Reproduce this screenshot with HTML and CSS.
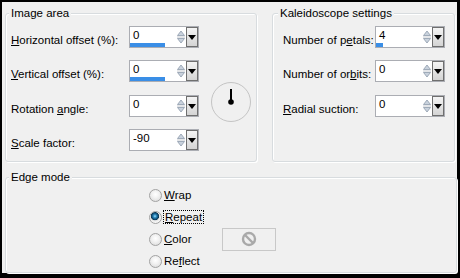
FILE: index.html
```html
<!DOCTYPE html>
<html>
<head>
<meta charset="utf-8">
<link rel="stylesheet" href="styles.css">
</head>
<body>
<div class="frame">
  <div class="top">
    <div class="group g-image">
      <span class="legend">Image area</span>
      <div class="rows">
        <label class="lbl"><u>H</u>orizontal offset (%):</label>
        <div class="spin"><div class="field"><span class="val">0</span><span class="bar" style="width:35px"></span></div><div class="arrows"><svg width="10" height="18" viewBox="0 0 10 18"><path d="M1.5 7.5 L5 3 L8.5 7.5 Z" fill="#c9d2dd" stroke="#8d9aab" stroke-width="0.8"/><path d="M1 9 H9" stroke="#c8ccd2"/><path d="M1.5 10.5 L5 15 L8.5 10.5 Z" fill="#c9d2dd" stroke="#8d9aab" stroke-width="0.8"/></svg></div><div class="drop"><i></i></div></div>
        <span></span>
        <label class="lbl"><u>V</u>ertical offset (%):</label>
        <div class="spin"><div class="field"><span class="val">0</span><span class="bar" style="width:35px"></span></div><div class="arrows"><svg width="10" height="18" viewBox="0 0 10 18"><path d="M1.5 7.5 L5 3 L8.5 7.5 Z" fill="#c9d2dd" stroke="#8d9aab" stroke-width="0.8"/><path d="M1 9 H9" stroke="#c8ccd2"/><path d="M1.5 10.5 L5 15 L8.5 10.5 Z" fill="#c9d2dd" stroke="#8d9aab" stroke-width="0.8"/></svg></div><div class="drop"><i></i></div></div>
        <span></span>
        <label class="lbl">Rotation <u>a</u>ngle:</label>
        <div class="spin"><div class="field"><span class="val">0</span></div><div class="arrows"><svg width="10" height="18" viewBox="0 0 10 18"><path d="M1.5 7.5 L5 3 L8.5 7.5 Z" fill="#c9d2dd" stroke="#8d9aab" stroke-width="0.8"/><path d="M1 9 H9" stroke="#c8ccd2"/><path d="M1.5 10.5 L5 15 L8.5 10.5 Z" fill="#c9d2dd" stroke="#8d9aab" stroke-width="0.8"/></svg></div><div class="drop"><i></i></div></div>
        <div class="dial"><svg width="42" height="42" viewBox="0 0 42 42"><circle cx="21" cy="21" r="19.5" fill="#f0f0f0" stroke="#c4c4c4" stroke-width="1"/><path d="M21 8 V21" stroke="#000" stroke-width="2"/><circle cx="21" cy="21" r="2.8" fill="#000"/></svg></div>
        <label class="lbl"><u>S</u>cale factor:</label>
        <div class="spin"><div class="field"><span class="val">-90</span></div><div class="arrows"><svg width="10" height="18" viewBox="0 0 10 18"><path d="M1.5 7.5 L5 3 L8.5 7.5 Z" fill="#c9d2dd" stroke="#8d9aab" stroke-width="0.8"/><path d="M1 9 H9" stroke="#c8ccd2"/><path d="M1.5 10.5 L5 15 L8.5 10.5 Z" fill="#c9d2dd" stroke="#8d9aab" stroke-width="0.8"/></svg></div><div class="drop"><i></i></div></div>
        <span></span>
      </div>
    </div>
    <div class="group g-kal">
      <span class="legend">Kaleidoscope settings</span>
      <div class="rows rows-k">
        <label class="lbl">Number of p<u>e</u>tals:</label>
        <div class="spin"><div class="field"><span class="val">4</span><span class="bar" style="width:7px"></span></div><div class="arrows"><svg width="10" height="18" viewBox="0 0 10 18"><path d="M1.5 7.5 L5 3 L8.5 7.5 Z" fill="#c9d2dd" stroke="#8d9aab" stroke-width="0.8"/><path d="M1 9 H9" stroke="#c8ccd2"/><path d="M1.5 10.5 L5 15 L8.5 10.5 Z" fill="#c9d2dd" stroke="#8d9aab" stroke-width="0.8"/></svg></div><div class="drop"><i></i></div></div>
        <label class="lbl">Number of or<u>b</u>its:</label>
        <div class="spin"><div class="field"><span class="val">0</span></div><div class="arrows"><svg width="10" height="18" viewBox="0 0 10 18"><path d="M1.5 7.5 L5 3 L8.5 7.5 Z" fill="#c9d2dd" stroke="#8d9aab" stroke-width="0.8"/><path d="M1 9 H9" stroke="#c8ccd2"/><path d="M1.5 10.5 L5 15 L8.5 10.5 Z" fill="#c9d2dd" stroke="#8d9aab" stroke-width="0.8"/></svg></div><div class="drop"><i></i></div></div>
        <label class="lbl"><u>R</u>adial suction:</label>
        <div class="spin"><div class="field"><span class="val">0</span></div><div class="arrows"><svg width="10" height="18" viewBox="0 0 10 18"><path d="M1.5 7.5 L5 3 L8.5 7.5 Z" fill="#c9d2dd" stroke="#8d9aab" stroke-width="0.8"/><path d="M1 9 H9" stroke="#c8ccd2"/><path d="M1.5 10.5 L5 15 L8.5 10.5 Z" fill="#c9d2dd" stroke="#8d9aab" stroke-width="0.8"/></svg></div><div class="drop"><i></i></div></div>
      </div>
    </div>
  </div>
  <div class="group g-edge">
    <span class="legend">Edge mode</span>
    <div class="opts">
      <div class="opt"><span class="radio"></span><span class="olbl"><u>W</u>rap</span></div>
      <div class="opt"><span class="radio on"></span><span class="olbl"><span class="focus"><u>R</u>epeat</span></span></div>
      <div class="opt"><span class="radio"></span><span class="olbl"><u>C</u>olor</span><span class="swatch"><svg width="16" height="16" viewBox="0 0 16 16"><circle cx="8" cy="8" r="6" fill="none" stroke="#a9a9a9" stroke-width="2.4"/><path d="M4 4 L12 12" stroke="#a9a9a9" stroke-width="2.4"/></svg></span></div>
      <div class="opt"><span class="radio"></span><span class="olbl">Re<u>f</u>lect</span></div>
    </div>
  </div>
</div>
</body>
</html>
```

FILE: styles.css
```css
* { box-sizing: border-box; }
body {
  margin: 0;
  font-family: "Liberation Sans", Arial, sans-serif;
  font-size: 11.5px;
  color: #000;
}
u { text-decoration: underline; text-underline-offset: 1px; }
.frame {
  width: 460px;
  height: 278px;
  border: solid #000;
  border-width: 2px 3px 5px 2px;
  background: #f0f0f0;
  padding: 11px 0 0 3px;
  display: flex;
  flex-direction: column;
}
.top {
  display: flex;
  gap: 15px;
  height: 150px;
}
.group {
  position: relative;
  border: 1px solid #d8dcdf;
  border-radius: 3px;
  box-shadow: inset 1px 1px 0 #fff, 1px 1px 0 #fff;
}
.legend {
  position: absolute;
  top: -8px;
  left: 3px;
  padding: 0 2px;
  background: #f0f0f0;
  line-height: 14px;
  white-space: nowrap;
}
.g-image { width: 252px; padding: 12px 0 0 5px; }
.g-kal { width: 183px; padding: 12px 0 0 10px; }
.g-kal .legend { left: 5px; }
.rows {
  display: grid;
  grid-template-columns: 118px 70px auto;
  grid-template-rows: 22px 22px 22px 22px;
  row-gap: 12px;
  align-items: center;
}
.rows > :nth-child(n+7) { position: relative; top: 1px; }
.rows > :nth-child(n+10) { top: 1px; }
.rows-k { grid-template-columns: 92px 70px; grid-template-rows: 22px 22px 22px; }
.rows-k > :nth-child(n+5) { position: relative; top: 1px; }
.lbl { white-space: nowrap; padding-top: 5px; }
.spin {
  display: flex;
  width: 70px;
  height: 22px;
  border: 1px solid #abadb3;
  background: #fff;
}
.field {
  flex: 1;
  display: flex;
  flex-direction: column;
  padding-top: 1px;
}
.val { padding-left: 3px; line-height: 14px; }
.bar { margin-top: auto; height: 4px; background: #3a8ee6; }
.arrows {
  width: 11px;
  display: flex;
  align-items: center;
  justify-content: center;
}
.drop {
  width: 12px;
  border: 1px solid #6f6f6f;
  background: linear-gradient(#f4f4f4, #d4d4d4);
  display: flex;
  align-items: center;
  justify-content: center;
}
.drop i {
  width: 0;
  height: 0;
  border-left: 4px solid transparent;
  border-right: 4px solid transparent;
  border-top: 5px solid #000;
}
.dial {
  align-self: start;
  margin: -14px 0 0 11px;
  width: 42px;
  height: 42px;
}
.dial svg { display: block; }
.g-edge {
  flex: 1;
  margin-top: 15px;
  padding: 6px 0 0 143px;
}
.opt {
  display: flex;
  align-items: center;
  height: 22px;
}
.radio {
  width: 13px;
  height: 13px;
  border-radius: 50%;
  border: 1px solid #a2a2a2;
  background: radial-gradient(circle at 50% 40%, #ffffff 0, #f2f2f2 40%, #d6d6d6 100%);
  margin-right: 2px;
  flex: none;
}
.radio.on {
  background: radial-gradient(circle at 45% 38%, #9fe0fa 0, #2f8cc0 1.5px, #10507a 3px, #0b3550 3.8px, #e4e4e4 4.4px, #f6f6f6 6px);
}
.olbl { width: 58px; white-space: nowrap; }
.focus { outline: 1px dotted #000; outline-offset: 0; padding: 0 1px; }
.swatch {
  width: 54px;
  height: 23px;
  margin: -1px 0;
  border: 1px solid #c8c8c8;
  background: #f0f0f0;
  display: flex;
  align-items: center;
  justify-content: center;
}
.swatch svg { display: block; }
```
